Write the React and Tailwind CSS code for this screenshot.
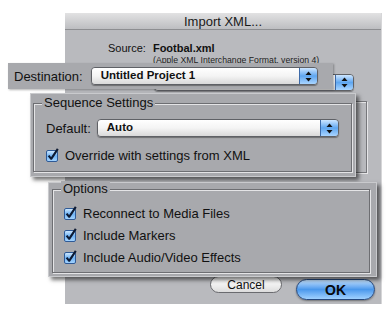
import React from "react";

const FONT = "font-['Liberation_Sans','Arial',sans-serif]";

function Arrows({ className = "" }) {
  return (
    <svg width="7" height="11" viewBox="0 0 7 11" className={className}>
      <path d="M3.5 0.5 L6.5 4 L0.5 4 Z" fill="#111" />
      <path d="M3.5 10.5 L6.5 7 L0.5 7 Z" fill="#111" />
    </svg>
  );
}

function PopUp({ value, width, height = "h-[18px]", text = "text-[11.5px]" }) {
  return (
    <div
      className={`${width} ${height} flex rounded-[4px] border border-[#5f6166] overflow-hidden shadow-[0_1px_1px_rgba(0,0,0,0.35)]`}
    >
      <div className="flex-1 flex items-center pl-[9px] bg-gradient-to-b from-white via-[#f4f4f4] to-[#d9d9d9]">
        {value && <span className={`${text} font-bold text-[#111] leading-none`}>{value}</span>}
      </div>
      <div className="w-[18px] flex items-center justify-center border-l border-[#3d6aa8] bg-gradient-to-b from-[#cde6ff] via-[#5ea6f0] to-[#a9d5ff]">
        <Arrows />
      </div>
    </div>
  );
}

function Check() {
  return (
    <svg width="14" height="14" viewBox="0 0 14 14" className="shrink-0">
      <defs>
        <linearGradient id="cb" x1="0" y1="0" x2="0" y2="1">
          <stop offset="0" stopColor="#d6ecff" />
          <stop offset="0.5" stopColor="#6fb3f5" />
          <stop offset="1" stopColor="#a8d6ff" />
        </linearGradient>
      </defs>
      <rect x="0.5" y="2.5" width="11" height="11" rx="1.5" fill="url(#cb)" stroke="#2f5a96" />
      <path d="M2.6 7.6 L5.2 10.8 L11.8 0.8" fill="none" stroke="#0d1a33" strokeWidth="2.1" strokeLinejoin="round" />
    </svg>
  );
}

function CheckRow({ label }) {
  return (
    <div className="flex items-center gap-[5px] h-[22px]">
      <Check />
      <span className="text-[13px] text-[#111] leading-none">{label}</span>
    </div>
  );
}

function GroupBox({ title, className, children }) {
  return (
    <div
      className={`relative border border-[#6d6e72] shadow-[1px_1px_0_#e4e4e6,inset_1px_1px_0_#e4e4e6] ${className}`}
    >
      <span className="absolute -top-[9px] left-[8px] px-[2px] bg-[#a8a9ad] text-[13px] leading-[16px] text-[#111]">
        {title}
      </span>
      {children}
    </div>
  );
}

export default function App() {
  return (
    <div className={`relative w-[391px] h-[314px] bg-white overflow-hidden ${FONT}`}>
      {/* the dialog underneath */}
      <div className="ml-[65px] pt-[13px]">
        <div className="w-[317px] h-[291px] flex flex-col bg-[#b9babe] border-r border-[#d6d6d8]">
          <div className="h-[17px] shrink-0 flex items-center justify-center bg-gradient-to-b from-[#e2e2e3] to-[#bdbec1] border-b border-[#8d8e91]">
            <span className="text-[13px] leading-none text-[#1a1a1a]">Import XML...</span>
          </div>
          <div className="flex items-center pl-[43px] mt-[11px] h-[14px]">
            <span className="text-[11px] text-[#111]">Source:</span>
            <span className="ml-[7px] text-[11px] font-bold text-[#111]">Footbal.xml</span>
          </div>
          <div className="pl-[88px] text-[8.7px] leading-[11px] text-[#222]">
            (Apple XML Interchange Format, version 4)
          </div>
          <div className="pl-[89px] mt-[8px]">
            <PopUp width="w-[200px]" height="h-[17px]" />
          </div>
          <div className="ml-[20px] mr-[14px] mt-[10px] h-[72px] border border-[#76777b] shadow-[1px_1px_0_#e6e6e8,inset_1px_1px_0_#e6e6e8]" />
          <div className="flex items-start mt-auto pb-[4px] pl-[145px] h-[28px]">
            <div className="w-[72px] h-[17px] rounded-full border border-[#6a6b6f] bg-gradient-to-b from-white via-[#f2f2f2] to-[#dcdcdc] flex items-center justify-center">
              <span className="text-[12px] leading-none text-[#111]">Cancel</span>
            </div>
            <div className="ml-[14px] mt-[3px] w-[79px] h-[21px] rounded-full border border-[#26497e] bg-gradient-to-b from-[#c3e2ff] via-[#4a98ec] to-[#9fd1ff] flex items-center justify-center shadow-[0_1px_2px_rgba(0,0,0,0.4)]">
              <span className="text-[14px] font-bold leading-none text-[#0a0a0a]">OK</span>
            </div>
          </div>
        </div>
      </div>

      {/* callout: destination */}
      <div className="absolute left-[8px] top-[63px] w-[325px] h-[26px] bg-[#a8a9ad] flex items-center pl-[6px] shadow-[1px_1px_2px_rgba(0,0,0,0.3)]">
        <span className="text-[13px] text-[#111] leading-none">Destination:</span>
        <div className="ml-[8px]">
          <PopUp value="Untitled Project 1" width="w-[227px]" />
        </div>
      </div>

      {/* callout: sequence settings */}
      <div className="absolute left-[30px] top-[93px] w-[326px] h-[84px] bg-[#a8a9ad] border border-[#c9cacd] pl-[2px] pr-[3px] pt-[9px] pb-[4px] shadow-[3px_3px_4px_rgba(0,0,0,0.55)]">
        <GroupBox title="Sequence Settings" className="h-full pl-[12px] pt-[15px]">
          <div className="flex items-center h-[18px]">
            <span className="text-[13px] text-[#111] leading-none">Default:</span>
            <div className="ml-[6px]">
              <PopUp value="Auto" width="w-[242px]" />
            </div>
          </div>
          <div className="mt-[7px]">
            <CheckRow label="Override with settings from XML" />
          </div>
        </GroupBox>
      </div>

      {/* callout: options */}
      <div className="absolute left-[48px] top-[182px] w-[329px] h-[95px] bg-[#a8a9ad] border border-[#c9cacd] pl-[3px] pr-[6px] pt-[6px] pb-[3px] shadow-[3px_3px_4px_rgba(0,0,0,0.55)]">
        <GroupBox title="Options" className="h-full pl-[11px] pt-[12px]">
          <CheckRow label="Reconnect to Media Files" />
          <CheckRow label="Include Markers" />
          <CheckRow label="Include Audio/Video Effects" />
        </GroupBox>
      </div>
    </div>
  );
}
